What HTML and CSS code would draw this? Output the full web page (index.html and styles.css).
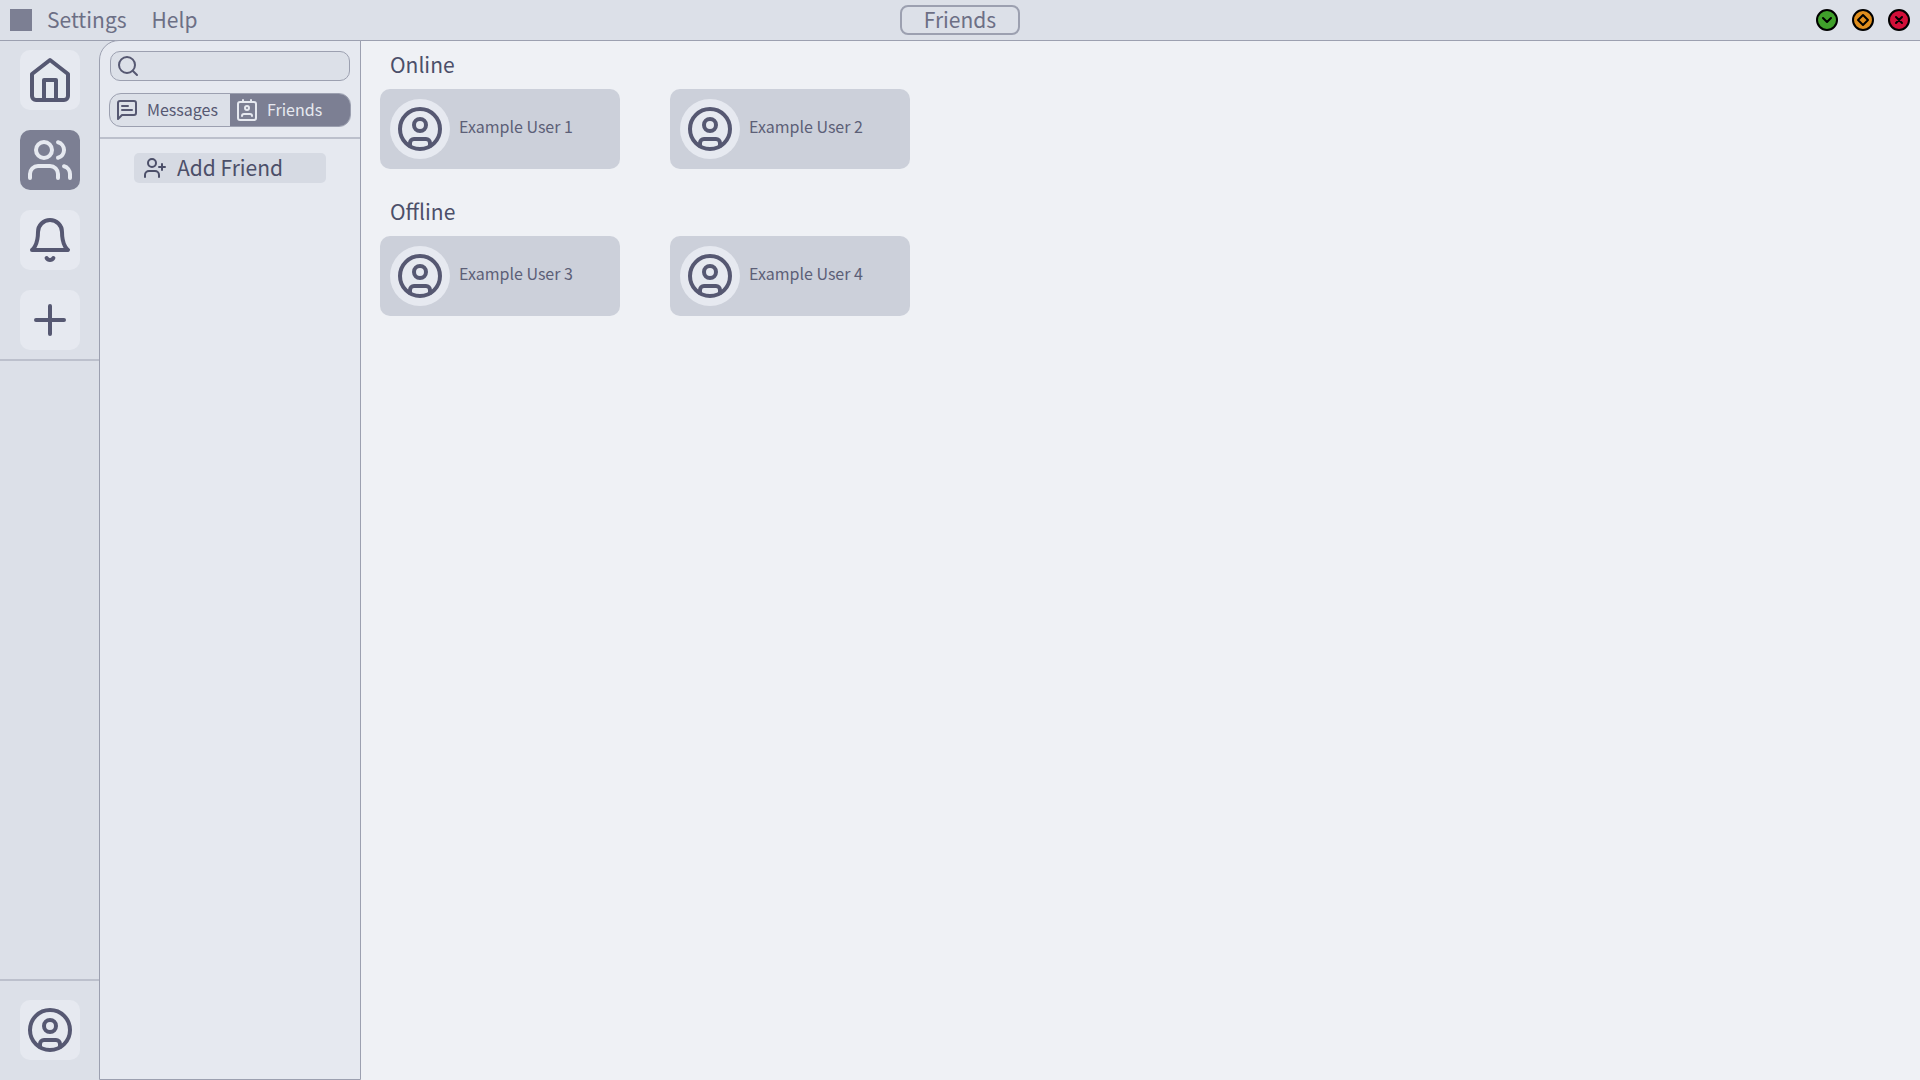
FILE: index.html
```html
<!DOCTYPE html>
<html lang="en">
<head>
<meta charset="utf-8">
<title>Friends</title>
<link rel="stylesheet" href="styles.css">
</head>
<body>
<svg class="sprite" aria-hidden="true">
  <symbol id="home" viewBox="0 0 24 24"><path d="M3 9l9-7 9 7v11a2 2 0 0 1-2 2H5a2 2 0 0 1-2-2z"/><path d="M9 22V12h6v10"/></symbol>
  <symbol id="users" viewBox="0 0 24 24"><path d="M16 21v-2a4 4 0 0 0-4-4H6a4 4 0 0 0-4 4v2"/><circle cx="9" cy="7" r="4"/><path d="M22 21v-2a4 4 0 0 0-3-3.87M16 3.13a4 4 0 0 1 0 7.75"/></symbol>
  <symbol id="bell" viewBox="0 0 24 24"><path d="M6 8a6 6 0 0 1 12 0c0 7 3 9 3 9H3s3-2 3-9"/><path d="M10.3 21a1.94 1.94 0 0 0 3.4 0"/></symbol>
  <symbol id="plus" viewBox="0 0 24 24"><path d="M5 12h14M12 5v14"/></symbol>
  <symbol id="user" viewBox="0 0 24 24"><circle cx="12" cy="12" r="10"/><circle cx="12" cy="10" r="3"/><path d="M7 20.662V19a2 2 0 0 1 2-2h6a2 2 0 0 1 2 2v1.662"/></symbol>
  <symbol id="search" viewBox="0 0 24 24"><circle cx="11" cy="11" r="8"/><path d="M21 21l-4.3-4.3"/></symbol>
  <symbol id="message" viewBox="0 0 24 24"><path d="M21 15a2 2 0 0 1-2 2H7l-4 4V5a2 2 0 0 1 2-2h14a2 2 0 0 1 2 2zM13 8H7M17 12H7"/></symbol>
  <symbol id="contact" viewBox="0 0 24 24"><path d="M17 18a2 2 0 0 0-2-2H9a2 2 0 0 0-2 2"/><rect x="3" y="4" width="18" height="18" rx="2"/><circle cx="12" cy="10" r="2"/><path d="M8 2v2M16 2v2"/></symbol>
  <symbol id="user-plus" viewBox="0 0 24 24"><path d="M16 21v-2a4 4 0 0 0-4-4H6a4 4 0 0 0-4 4v2"/><circle cx="9" cy="7" r="4"/><path d="M19 8v6M22 11h-6"/></symbol>
</svg>

<header class="topbar">
  <nav class="menu" aria-label="Application">
    <span class="logo"></span>
    <button class="menu-item" type="button">Settings</button>
    <button class="menu-item" type="button">Help</button>
  </nav>
  <h1 class="page-title">Friends</h1>
  <div class="window-controls">
    <button class="control minimize" type="button" aria-label="Minimize"><svg viewBox="0 0 22 22"><path d="M7 9l4 4 4-4"/></svg></button>
    <button class="control maximize" type="button" aria-label="Maximize"><svg viewBox="0 0 22 22"><path d="M11 6l5 5-5 5-5-5z"/></svg></button>
    <button class="control close" type="button" aria-label="Close"><svg viewBox="0 0 22 22"><path d="M8 8l6 6M14 8l-6 6"/></svg></button>
  </div>
</header>

<div class="app">
  <nav class="rail" aria-label="Main">
    <div class="rail-top">
      <button class="tile" type="button" aria-label="Home"><svg class="icon-lg"><use href="#home"/></svg></button>
      <button class="tile active" type="button" aria-label="Friends"><svg class="icon-lg"><use href="#users"/></svg></button>
      <button class="tile" type="button" aria-label="Notifications"><svg class="icon-lg"><use href="#bell"/></svg></button>
      <button class="tile" type="button" aria-label="Add"><svg class="icon-lg"><use href="#plus"/></svg></button>
    </div>
    <div class="rail-bottom">
      <button class="tile" type="button" aria-label="Account"><svg class="icon-lg"><use href="#user"/></svg></button>
    </div>
  </nav>

  <aside class="panel">
    <div class="panel-head">
      <label class="search">
        <svg class="icon"><use href="#search"/></svg>
        <input class="search-input" type="text" aria-label="Search">
      </label>
      <div class="tabs">
        <button class="tab" type="button"><svg class="icon"><use href="#message"/></svg><span class="label">Messages</span></button>
        <button class="tab active" type="button"><svg class="icon"><use href="#contact"/></svg><span class="label">Friends</span></button>
      </div>
    </div>
    <button class="add-friend" type="button"><svg class="icon"><use href="#user-plus"/></svg><span class="label">Add Friend</span></button>
  </aside>

  <main class="content">
    <section class="group">
      <h2 class="group-title">Online</h2>
      <div class="cards">
        <button class="card" type="button"><span class="avatar"><svg class="icon-lg"><use href="#user"/></svg></span><span class="name">Example User 1</span></button>
        <button class="card" type="button"><span class="avatar"><svg class="icon-lg"><use href="#user"/></svg></span><span class="name">Example User 2</span></button>
      </div>
    </section>
    <section class="group">
      <h2 class="group-title">Offline</h2>
      <div class="cards">
        <button class="card" type="button"><span class="avatar"><svg class="icon-lg"><use href="#user"/></svg></span><span class="name">Example User 3</span></button>
        <button class="card" type="button"><span class="avatar"><svg class="icon-lg"><use href="#user"/></svg></span><span class="name">Example User 4</span></button>
      </div>
    </section>
  </main>
</div>
</body>
</html>
```
FILE: styles.css
```css
:root {
  --base: #eff1f5;
  --mantle: #e6e9f0;
  --crust: #dce0e8;
  --card: #ccd0da;
  --line: #9ca0b0;
  --line-soft: #bcc0cc;
  --overlay: #7c7f93;
  --muted: #6c6f85;
  --icon: #565872;
  --text: #4c4f69;
}

* { box-sizing: border-box; }

body {
  margin: 0;
  min-height: 100vh;
  display: flex;
  flex-direction: column;
  background: var(--base);
  color: var(--text);
  font: 21px/30px "Noto Sans CJK SC", "Noto Sans CJK JP", sans-serif;
}

button {
  margin: 0;
  padding: 0;
  border: 0;
  background: none;
  color: inherit;
  font: inherit;
  cursor: pointer;
}

h1, h2 {
  margin: 0;
  font: inherit;
}

svg {
  display: block;
  fill: none;
  stroke: currentColor;
  stroke-width: 2;
  stroke-linecap: round;
  stroke-linejoin: round;
}

.sprite { display: none; }

.icon {
  width: 24px;
  height: 24px;
  flex: none;
}

.icon-lg {
  width: 48px;
  height: 48px;
}

.label { padding-bottom: 2px; }

/* Top bar */
.topbar {
  display: grid;
  grid-template-columns: 1fr 120px 1fr;
  align-items: center;
  height: 41px;
  padding: 0 10px;
  border-bottom: 1px solid var(--line);
  background: var(--crust);
  color: var(--muted);
}

.menu {
  display: flex;
  align-items: center;
}

.logo {
  width: 22px;
  height: 22px;
  margin-right: 15px;
  background: var(--overlay);
}

.menu-item {
  margin-right: 25px;
  padding-bottom: 2px;
}

.page-title {
  padding-bottom: 2px;
  border: 2px solid var(--line);
  border-radius: 8px;
  line-height: 24px;
  text-align: center;
}

.window-controls {
  display: flex;
  justify-content: flex-end;
  gap: 14px;
}

.control {
  width: 22px;
  height: 22px;
  border: 2px solid #000;
  border-radius: 50%;
  color: #000;
}

.control svg {
  width: 22px;
  height: 22px;
  margin: -2px;
}

.minimize { background: #40a02b; }
.maximize { background: #df8e1d; }
.close { background: #d20f39; }

/* Layout: the crust colour runs behind the panel's rounded corner */
.app {
  flex: 1;
  display: flex;
  background: linear-gradient(to right, var(--crust) 120px, var(--base) 120px);
}

.rail {
  display: flex;
  flex-direction: column;
  justify-content: space-between;
  width: 99px;
  background: var(--crust);
}

.rail-top,
.rail-bottom {
  display: flex;
  flex-direction: column;
  gap: 20px;
  padding: 9px 20px;
  border-bottom: 2px solid var(--line-soft);
}

.rail-bottom {
  padding: 19px 20px 20px;
  border-top: 2px solid var(--line-soft);
  border-bottom: 0;
}

.tile {
  display: grid;
  place-items: center;
  width: 60px;
  height: 60px;
  border-radius: 10px;
  background: var(--mantle);
  color: var(--icon);
}

.tile.active {
  background: var(--overlay);
  color: var(--mantle);
}

/* Side panel, its top border shared with the top bar's line */
.panel {
  width: 262px;
  margin-top: -1px;
  border: 1px solid var(--line);
  border-top-left-radius: 20px;
  background: var(--mantle);
}

.panel-head {
  display: flex;
  flex-direction: column;
  gap: 12px;
  padding: 10px 9px;
  border-bottom: 2px solid var(--line-soft);
}

.search {
  display: flex;
  align-items: center;
  height: 30px;
  margin: 0 1px;
  padding: 0 5px;
  border: 1px solid var(--line);
  border-radius: 10px;
  background: var(--crust);
  color: var(--icon);
}

.search-input {
  flex: 1;
  min-width: 0;
  border: 0;
  outline: 0;
  background: none;
  color: var(--text);
  font: inherit;
  font-size: 16px;
  line-height: 24px;
}

.tabs {
  display: flex;
  height: 34px;
  border: 1px solid var(--line);
  border-radius: 12px;
  overflow: hidden;
  background: var(--crust);
}

.tab {
  flex: 1 1 0;
  min-width: 0;
  display: flex;
  align-items: center;
  gap: 8px;
  padding: 0 5px;
  color: var(--icon);
  font-size: 16px;
  line-height: 24px;
}

.tab.active {
  background: var(--overlay);
  color: var(--mantle);
}

.add-friend {
  display: flex;
  align-items: center;
  gap: 10px;
  width: 192px;
  height: 30px;
  margin: 14px auto;
  padding: 0 9px;
  border-radius: 5px;
  background: #d6dae3;
}

/* Friend list */
.content {
  flex: 1;
  padding: 8px 19px;
  background: var(--base);
}

.group { margin-bottom: 27px; }

.group-title {
  margin-bottom: 10px;
  padding: 0 10px;
}

.cards {
  display: flex;
  flex-wrap: wrap;
  gap: 50px;
}

.card {
  display: flex;
  align-items: center;
  gap: 9px;
  width: 240px;
  height: 80px;
  padding: 0 10px;
  border-radius: 10px;
  background: var(--card);
  color: #5c5f77;
  font-size: 16px;
  line-height: 24px;
  text-align: left;
}

.name { padding-bottom: 6px; }

.avatar {
  display: grid;
  place-items: center;
  width: 60px;
  height: 60px;
  border-radius: 50%;
  background: var(--mantle);
  color: var(--icon);
}
```
